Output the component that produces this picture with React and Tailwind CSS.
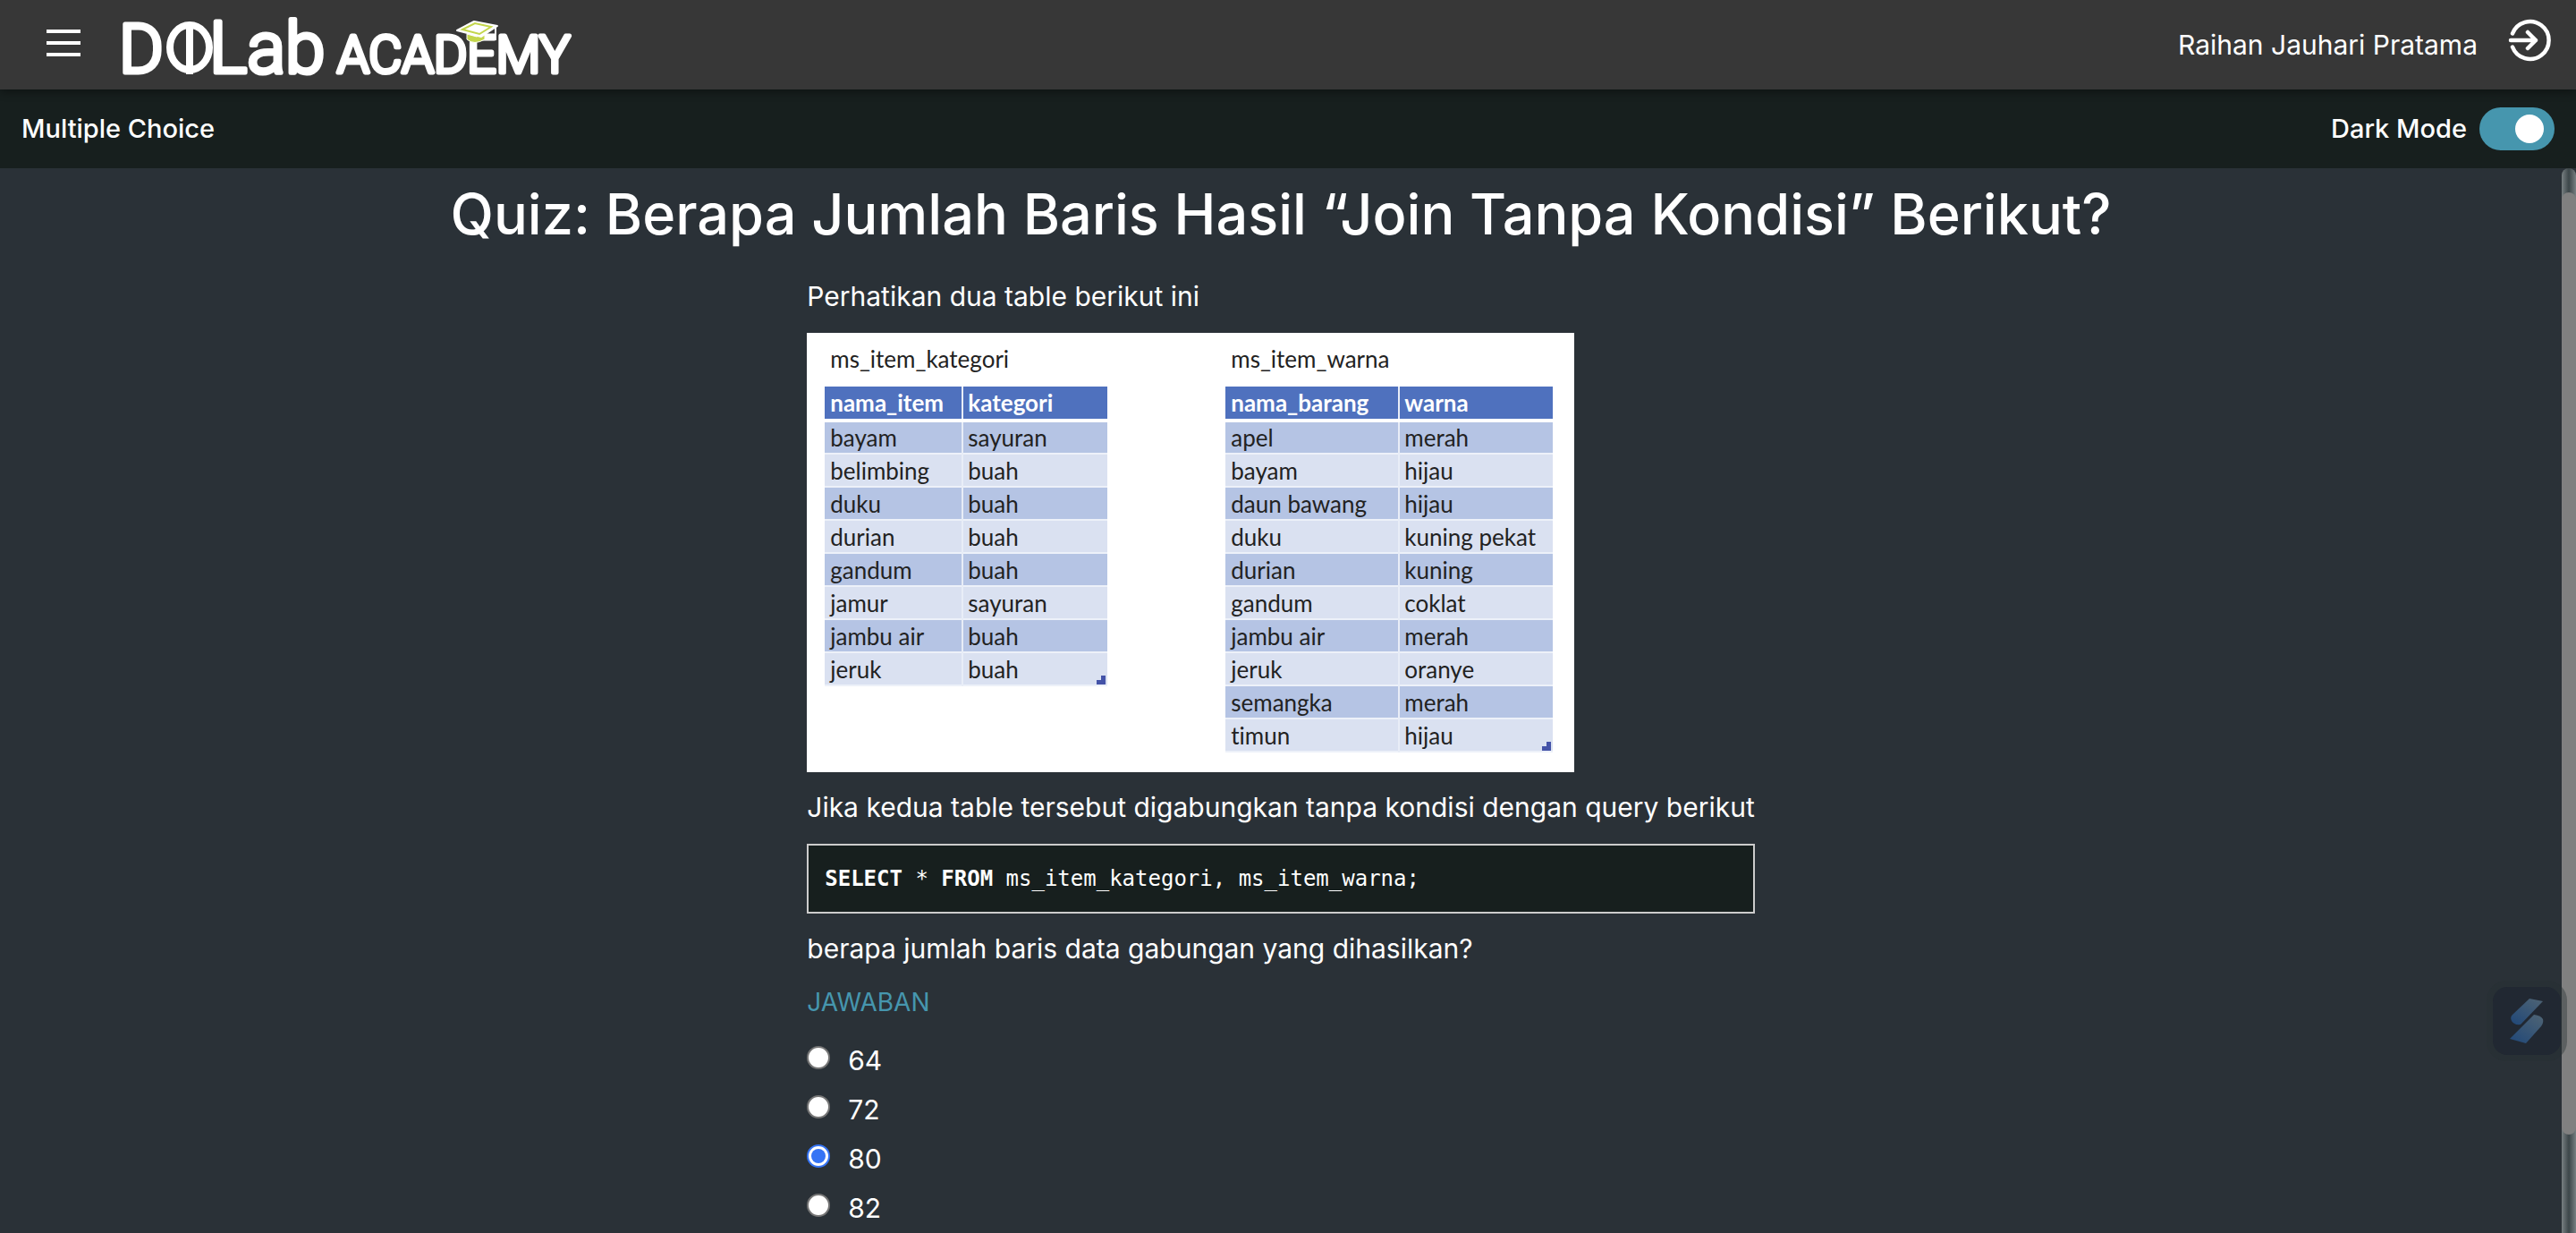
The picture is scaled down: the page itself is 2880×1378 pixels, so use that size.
import React, { useState } from "react";

const kategori = {
  title: "ms_item_kategori",
  head: ["nama_item", "kategori"],
  rows: [
    ["bayam", "sayuran"],
    ["belimbing", "buah"],
    ["duku", "buah"],
    ["durian", "buah"],
    ["gandum", "buah"],
    ["jamur", "sayuran"],
    ["jambu air", "buah"],
    ["jeruk", "buah"],
  ],
};

const warna = {
  title: "ms_item_warna",
  head: ["nama_barang", "warna"],
  rows: [
    ["apel", "merah"],
    ["bayam", "hijau"],
    ["daun bawang", "hijau"],
    ["duku", "kuning pekat"],
    ["durian", "kuning"],
    ["gandum", "coklat"],
    ["jambu air", "merah"],
    ["jeruk", "oranye"],
    ["semangka", "merah"],
    ["timun", "hijau"],
  ],
};

function Logo() {
  return (
    <svg viewBox="0 0 520 110" className="h-[110px] w-[520px] overflow-visible" role="img" aria-label="DQLab Academy">
      <g fill="#fff" stroke="#fff" strokeWidth="5" strokeLinejoin="round" fontFamily="Roboto, sans-serif" fontWeight="300">
        <text x="3" y="86" fontSize="76">D</text>
        <text x="104" y="86" fontSize="80">Lab</text>
        <text x="247" y="86" fontSize="57">ACADEMY</text>
      </g>
      <ellipse cx="82" cy="58" rx="22" ry="25" fill="none" stroke="#fff" strokeWidth="8" />
      <rect x="78" y="34" width="8" height="54" fill="#fff" />
      <path d="M392 43v6q8 7 20 0v-8l-9 5z" fill="#c3d64b" stroke="#fff" strokeWidth="1" />
      <path d="M381 39 400 29 426 34 408 46z" fill="#fff" stroke="#fff" strokeWidth="2" strokeLinejoin="round" />
      <path d="M387 38 401 31 419 35 406 43z" fill="#fff" stroke="#c3d64b" strokeWidth="2" />
      <path d="M424 35v9M424 46v4" stroke="#fff" strokeWidth="2" />
    </svg>
  );
}

function DataTable({ data, className, first }) {
  return (
    <div className={className}>
      <table className="w-full border-collapse text-left text-[26px] leading-[34px] text-[#222]">
        <caption className="h-[60px] px-[6px] pt-[12px] text-left">{data.title}</caption>
        <thead>
          <tr className="h-[38px] border-b-4 border-white bg-[#4f71be] text-white">
            <th className={first}>{data.head[0]}</th>
            <th className="border-l-2 border-[#e8edf7] px-[5px] font-bold">{data.head[1]}</th>
          </tr>
        </thead>
        <tbody>
          {data.rows.map((r) => (
            <tr key={r[0]} className="h-[37px] border-b-2 border-[#edf1f9] odd:bg-[#b5c4e4] even:bg-[#dae1f1]">
              <td className="px-[6px]">{r[0]}</td>
              <td className="border-l-2 border-[#e8edf7] px-[5px]">{r[1]}</td>
            </tr>
          ))}
        </tbody>
      </table>
      <svg viewBox="0 0 10 10" className="absolute right-[2px] bottom-[2px] h-[10px] w-[10px]" aria-hidden="true">
        <path d="M5 0h5v10H0V5h5z" fill="#4453a8" />
      </svg>
    </div>
  );
}

export default function App() {
  const [dark, setDark] = useState(true);
  const [answer, setAnswer] = useState("80");
  return (
    <div className="flex h-screen flex-col overflow-hidden bg-[#2a3137] font-[Inter,sans-serif] text-[30px] leading-[42px] text-white">
      <header className="z-10 flex h-[100px] shrink-0 items-center justify-between bg-[#373737] pr-[28px] pl-[52px] shadow-[0_2px_10px_rgba(0,0,0,0.45)]">
        <div className="flex items-center">
          <button type="button" aria-label="Menu" className="flex w-[38px] flex-col gap-[9px] pb-[5px]">
            <span className="h-[4px] bg-white" />
            <span className="h-[4px] bg-white" />
            <span className="h-[4px] bg-white" />
          </button>
          <a href="#home" className="ml-[40px]"><Logo /></a>
        </div>
        <div className="flex items-center gap-[34px]">
          <span>Raihan Jauhari Pratama</span>
          <button type="button" aria-label="Keluar" className="pb-[10px]">
            <svg viewBox="0 0 48 48" className="h-[48px] w-[48px]" fill="none" stroke="#fff" strokeWidth="4.5" strokeLinecap="round" strokeLinejoin="round">
              <path d="M5 16.500A21 21 0 1 1 5 31.500M3 24h28M22 15l9 9-9 9" />
            </svg>
          </button>
        </div>
      </header>

      <div className="flex h-[88px] shrink-0 items-center justify-between bg-[#171f1e] px-[24px] text-[29px] font-medium">
        <span>Multiple Choice</span>
        <label className="flex items-center gap-[14px]">
          Dark Mode
          <input
            type="checkbox"
            role="switch"
            checked={dark}
            onChange={(e) => setDark(e.target.checked)}
            className="h-[48px] w-[84px] appearance-none rounded-full bg-gray-500 p-[8px] before:block before:h-[32px] before:w-[32px] before:rounded-full before:bg-white checked:bg-[#4696ae] checked:before:ml-[32px]"
          />
        </label>
      </div>

      <div className="flex min-h-0 flex-1">
        <main className="min-w-0 flex-1 overflow-hidden">
          <h1 className="pt-[6px] text-center text-[63px] leading-[90px] font-medium">
            Quiz: Berapa Jumlah Baris Hasil “Join Tanpa Kondisi” Berikut?
          </h1>
          <div className="mx-auto mt-[26px] w-fit">
            <p>Perhatikan dua table berikut ini</p>
            <div className="mt-[20px] flex w-[858px] items-start bg-white pr-[24px] pb-[22px] pl-[20px] font-[Lato,sans-serif] [font-variant-ligatures:none]">
              <DataTable data={kategori} className="relative w-[316px]" first="w-[154px] px-[6px] font-bold" />
              <DataTable data={warna} className="relative ml-auto w-[366px]" first="w-[194px] px-[6px] font-bold" />
            </div>
            <p className="mt-[18px]">Jika kedua table tersebut digabungkan tanpa kondisi dengan query berikut</p>
            <pre className="mt-[20px] border-2 border-[#ccc] bg-[#171f1e] px-[18px] py-[19px] text-[24px] leading-[36px]">
              <code className="block font-[DejaVu_Sans_Mono,monospace]"><b>SELECT</b> * <b>FROM</b> ms_item_kategori, ms_item_warna;</code>
            </pre>
            <p className="mt-[18px]">berapa jumlah baris data gabungan yang dihasilkan?</p>
            <fieldset className="pt-[18px]">
              <legend className="contents"><span className="block text-[28px] text-[#4696ae]">JAWABAN</span></legend>
              <div className="pt-[14px]">
                {["64", "72", "80", "82"].map((v) => (
                  <label key={v} className="flex h-[55px] items-center gap-[20px] pt-[4px]">
                    <input
                      type="radio"
                      name="jawaban"
                      value={v}
                      checked={answer === v}
                      onChange={() => setAnswer(v)}
                      className="mb-[6px] flex h-[26px] w-[26px] appearance-none items-center justify-center rounded-full border-2 border-[#767676] bg-white before:h-[16px] before:w-[16px] before:rounded-full checked:border-[#3574f5] checked:before:bg-[#3574f5]"
                    />
                    {v}
                  </label>
                ))}
              </div>
            </fieldset>
          </div>
        </main>
        <div className="w-[16px] rounded-t-full bg-linear-to-r from-[#788082] via-[#3c4649] to-[#788082] pt-[27px]" aria-hidden="true">
          <div className="h-[1053px] rounded-full bg-[#808080]" />
        </div>
      </div>

      <button type="button" aria-label="Asisten" className="fixed right-[10px] bottom-[192px] z-20 flex h-[90px] w-[90px] items-center justify-center rounded-[22px] bg-[#263033]/40">
        <span className="flex h-[76px] w-[76px] items-center justify-center rounded-[16px] bg-[#212832]">
          <svg viewBox="0 0 40 52" className="h-[52px] w-[40px]" aria-hidden="true">
            <defs>
              <linearGradient id="s" x1="1" y1="0" x2="0.2" y2="1">
                <stop offset="0" stopColor="#4f6474" />
                <stop offset="1" stopColor="#244a78" />
              </linearGradient>
            </defs>
            <path d="M23 1 38 4 13 30Q6 31 3 26 1 22 4 19z" fill="url(#s)" />
            <path d="M28 19Q36 20 38 24 39 28 36 32L19 51 1 46z" fill="url(#s)" />
          </svg>
        </span>
      </button>
    </div>
  );
}
